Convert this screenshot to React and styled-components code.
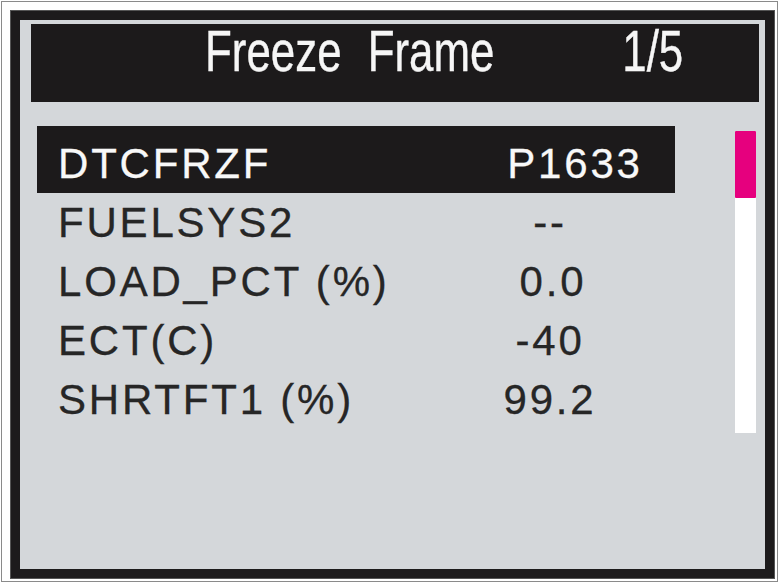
import React from "react";
import styled, { createGlobalStyle } from "styled-components";

const Global = createGlobalStyle`
  html, body { margin: 0; padding: 0; background: #ffffff; }
  body { font-family: "Liberation Sans", Arial, sans-serif; }
`;

const Device = styled.div`
  margin: 1px 0 0 1px;
  width: 777px;
  height: 581px;
  box-sizing: border-box;
  border: 1px solid #8a8a8a;
  padding: 9px 3px 3px 9px;
  background: #ffffff;
`;

const Bezel = styled.div`
  height: 100%;
  box-sizing: border-box;
  border: 9px solid #1d1b1c;
  box-shadow: 0 0 0 1px #555;
  background: #d4d7da;
  display: flex;
  flex-direction: column;
  padding: 4px 6px 0 11px;
`;

const Header = styled.div`
  height: 78px;
  flex: none;
  background: #1c1a1b;
  display: flex;
  align-items: flex-start;
  color: #f6f6f6;
  font-size: 57px;
  line-height: 54px;
`;

const HeadText = styled.span`
  display: inline-block;
  white-space: pre;
  transform: scaleX(0.77);
  transform-origin: ${(p) => (p.$right ? "right" : "left")} center;
  margin-left: ${(p) => (p.$right ? "auto" : "174px")};
  margin-right: ${(p) => (p.$right ? "76px" : "0")};
  word-spacing: 18px;
  -webkit-text-stroke: 0.4px #f6f6f6;
`;

const Body = styled.div`
  display: flex;
  align-items: flex-start;
  margin-top: 24px;
  margin-left: 6px;
`;

const List = styled.div`
  width: 638px;
  display: flex;
  flex-direction: column;
`;

const Row = styled.div`
  display: grid;
  grid-template-columns: 392px 200px;
  padding: ${(p) => (p.$selected ? "8px 0 0 21px" : "0 0 0 21px")};
  background: ${(p) => (p.$selected ? "#1c1a1b" : "transparent")};
  color: ${(p) => (p.$selected ? "#f8f8f8" : "#262626")};
  font-size: 42px;
  line-height: 59px;
  letter-spacing: 2.8px;
  white-space: pre;
  -webkit-text-stroke: 0.3px currentColor;
`;

const Label = styled.span``;

const Value = styled.span`
  text-align: center;
  padding-left: ${(p) => p.$shift || 0}px;
`;

const Scrollbar = styled.div`
  margin-left: 60px;
  margin-top: 5px;
  width: 21px;
  height: 302px;
  background: #ffffff;
  display: flex;
  flex-direction: column;
`;

const Thumb = styled.div`
  height: 67px;
  background: #e6007e;
  border-radius: 1px;
`;

const rows = [
  { label: "DTCFRZF", value: "P1633", shift: 50, selected: true },
  { label: "FUELSYS2", value: "--", shift: -6 },
  { label: "LOAD_PCT (%)", value: "0.0", shift: 6 },
  { label: "ECT(C)", value: "-40" },
  { label: "SHRTFT1 (%)", value: "99.2" },
];

export default function App() {
  return (
    <>
      <Global />
      <Device>
        <Bezel>
          <Header>
            <HeadText>Freeze Frame</HeadText>
            <HeadText $right>1/5</HeadText>
          </Header>
          <Body>
            <List>
              {rows.map((r) => (
                <Row key={r.label} $selected={r.selected}>
                  <Label>{r.label}</Label>
                  <Value $shift={r.shift}>{r.value}</Value>
                </Row>
              ))}
            </List>
            <Scrollbar>
              <Thumb />
            </Scrollbar>
          </Body>
        </Bezel>
      </Device>
    </>
  );
}
